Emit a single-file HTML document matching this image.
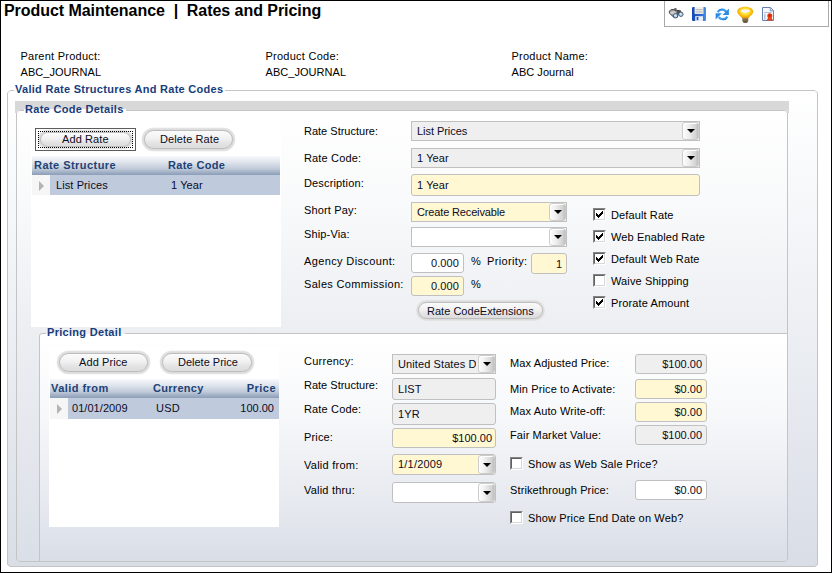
<!DOCTYPE html>
<html><head><meta charset="utf-8"><style>
*{box-sizing:border-box;}
html,body{margin:0;padding:0;}
body{width:832px;height:573px;position:relative;overflow:hidden;background:#fff;font-family:'Liberation Sans',sans-serif;}
.t{position:absolute;white-space:pre;}
.a{position:absolute;}
.grp{position:absolute;border:1px solid #c4c4c4;border-radius:3px;}
.btn{position:absolute;border-radius:12px;background:#e2e2e2;box-shadow:0 0 0 0.5px #f0f0f0;}
.btn>div{position:absolute;left:2px;top:2px;right:2px;bottom:2px;border:1px solid #bdbdbd;border-radius:10px;box-shadow:0 0 0 1px #dcdcdc;background:linear-gradient(#fbfbfb,#f1f1f1 45%,#e4e4e4 70%,#dcdcdc);}
.box{position:absolute;border:1px solid #c0c0c0;}
.gray{background:#efefef;}
.yel{background:#fff8d3;}
.wht{background:#fff;}
.dd{position:absolute;border-radius:3px;background:linear-gradient(90deg,#fdfdfd,#eeeeee 40%,#d2d2d2 85%,#bdbdbd);border:1px solid #cccccc;box-shadow:inset 1px 1px 0 #fff;}
.dd:after{content:"";position:absolute;left:50%;top:50%;margin-left:-4px;margin-top:-2px;border-left:4px solid transparent;border-right:4px solid transparent;border-top:4px solid #000;}
.cb{position:absolute;width:13px;height:13px;border:1px solid;border-color:#848484 #fff #fff #848484;}
.cb>div{position:absolute;left:0;top:0;width:11px;height:11px;border:1px solid;border-color:#606060 #d8d8d8 #d8d8d8 #606060;background:#fff;}
.cb svg{position:absolute;left:1px;top:1px;}
.ghdr{position:absolute;background:linear-gradient(#f7f8fb,#e2e7ee 30%,#bfc9d8 68%,#9aaac1 90%,#8c9db7);}
.grow{position:absolute;background:#c0cadd;}
.ind{position:absolute;background:#f6f6f6;}
.ind:after{content:"";position:absolute;left:7px;top:6px;border-top:5px solid transparent;border-bottom:5px solid transparent;border-left:5px solid #b4b4b4;}
</style></head><body>
<div class="a" style="left:0;top:0;width:832px;height:573px;border:1px solid #000;z-index:50"></div><div class="t" style="left:4px;top:1.46px;font-size:16px;line-height:20px;color:#000;font-weight:bold;letter-spacing:-0.05px;">Product Maintenance&nbsp; |&nbsp; Rates and Pricing</div><div class="a" style="left:664px;top:0;width:165px;height:27px;border:1px solid #a9a9a9;border-top:none;background:#fff"></div><svg class="a" style="left:668px;top:6px" width="16" height="14" viewBox="0 0 16 14">
<defs><linearGradient id="bn" x1="0" y1="0" x2="0.3" y2="1"><stop offset="0" stop-color="#5a5a5a"/><stop offset="0.45" stop-color="#d8d8d8"/><stop offset="1" stop-color="#6a6a6a"/></linearGradient></defs>
<path d="M8.5 4.2 L12.2 4.6 L14.6 7.2 L11.5 10 L9.2 7.8 Z" fill="#505050"/>
<path d="M1.2 5.2 L3.6 3.4 L6.3 3.6 L9.8 7.4 L9.4 11 L6.2 11.6 L1.6 7.4 Z" fill="url(#bn)" stroke="#3c3c3c" stroke-width="0.9" stroke-linejoin="round"/>
<rect x="6.3" y="2.2" width="2.2" height="1.6" fill="#4a4a4a"/>
<path d="M6.5 4 L12.8 5" stroke="#404040" stroke-width="1.2"/>
<circle cx="7.6" cy="9.8" r="2.2" fill="#a6d2fb" stroke="#3c4450" stroke-width="0.8"/>
<circle cx="12.9" cy="8.3" r="2.2" fill="#a6d2fb" stroke="#3c4450" stroke-width="0.8"/>
<circle cx="7.1" cy="9.3" r="0.8" fill="#eaf6ff"/><circle cx="12.4" cy="7.8" r="0.8" fill="#eaf6ff"/>
</svg><svg class="a" style="left:692px;top:7px" width="14" height="14" viewBox="0 0 14 14">
<defs><linearGradient id="fl" x1="0" y1="0" x2="1" y2="0"><stop offset="0" stop-color="#1648b0"/><stop offset="0.6" stop-color="#2a66cc"/><stop offset="1" stop-color="#4a90e8"/></linearGradient></defs>
<rect x="0" y="0" width="14" height="14" rx="1.2" fill="url(#fl)"/>
<rect x="2.6" y="0" width="8.9" height="6.9" fill="#f2f0ec"/>
<rect x="3.6" y="2.2" width="7" height="0.7" fill="#a8a8a8"/><rect x="3.6" y="3.8" width="7" height="0.7" fill="#a8a8a8"/><rect x="3.6" y="5.3" width="7" height="0.6" fill="#c0c0c0"/>
<rect x="3.2" y="9.2" width="7.8" height="4.8" fill="#e8eef8"/><rect x="4.6" y="10" width="1.8" height="3.2" fill="#1d58c0"/>
</svg><svg class="a" style="left:715px;top:6px" width="15" height="16" viewBox="0 0 15 16">
<defs><linearGradient id="rf" x1="0" y1="0" x2="1" y2="1"><stop offset="0" stop-color="#1b78de"/><stop offset="0.5" stop-color="#4aa8f4"/><stop offset="1" stop-color="#1b78de"/></linearGradient></defs>
<path d="M2.6 6.2 A5.2 5.2 0 0 1 11.2 5.6" fill="none" stroke="url(#rf)" stroke-width="2.3"/>
<path d="M7.6 8.9 L13.9 8.9 L13.9 2.6 Z" fill="#2a8ae8"/>
<path d="M12.4 10.6 A5.2 5.2 0 0 1 3.8 11.2" fill="none" stroke="url(#rf)" stroke-width="2.3"/>
<path d="M0.6 7.2 L6.9 7.2 L0.6 13.4 Z" fill="#2a8ae8"/>
</svg><svg class="a" style="left:737px;top:6px" width="17" height="17" viewBox="0 0 17 17">
<defs><radialGradient id="bg" cx="50%" cy="40%" r="60%"><stop offset="0" stop-color="#fffbe0"/><stop offset="0.35" stop-color="#ffe640"/><stop offset="0.8" stop-color="#f4b000"/><stop offset="1" stop-color="#d88000"/></radialGradient></defs>
<path d="M0.3 5.5 C0.3 -0.8 16.2 -0.8 16.2 5.5 C16.2 9 12 10.5 11.3 12.5 H5.2 C4.5 10.5 0.3 9 0.3 5.5 Z" fill="url(#bg)"/>
<ellipse cx="8.2" cy="5" rx="4.6" ry="1.4" fill="#f4f4ff"/>
<rect x="5.3" y="12.3" width="6" height="3.6" rx="0.8" fill="#7e6e48"/><rect x="6.3" y="15.5" width="4" height="1.3" fill="#4a4030"/>
</svg><svg class="a" style="left:762px;top:7px" width="12" height="14" viewBox="0 0 12 14">
<path d="M0.5 0.5 H8.5 L11.5 3.5 V13.5 H0.5 Z" fill="#f6f8fc" stroke="#6880b0" stroke-width="1"/>
<path d="M8.2 0.8 V3.8 H11.2" fill="#d8e2f2" stroke="#6880b0" stroke-width="0.8"/>
<rect x="2" y="5" width="7.5" height="0.7" fill="#90a4cc"/><rect x="2" y="7" width="1.6" height="5.5" fill="#b8c6e0"/>
<path d="M4.6 13.5 L6.2 10.5 L7.8 11.5 L9.4 10.5 L11 13.5 Z" fill="#ea3c0c"/>
<circle cx="7.8" cy="8.8" r="2.5" fill="#e83a10"/><circle cx="7.5" cy="8.4" r="1" fill="#c02000"/>
</svg><div class="t" style="left:20.5px;top:49.19px;font-size:11px;line-height:14px;color:#000;letter-spacing:0.25px;">Parent Product:</div><div class="t" style="left:20.5px;top:65.19px;font-size:11px;line-height:14px;color:#000;letter-spacing:0.05px;">ABC_JOURNAL</div><div class="t" style="left:265.5px;top:49.19px;font-size:11px;line-height:14px;color:#000;letter-spacing:0.25px;">Product Code:</div><div class="t" style="left:265.5px;top:65.19px;font-size:11px;line-height:14px;color:#000;letter-spacing:0.05px;">ABC_JOURNAL</div><div class="t" style="left:511.5px;top:49.19px;font-size:11px;line-height:14px;color:#000;letter-spacing:0.25px;">Product Name:</div><div class="t" style="left:511.5px;top:65.19px;font-size:11px;line-height:14px;color:#000;letter-spacing:0.05px;">ABC Journal</div><div class="a" style="left:7px;top:90px;width:811px;height:477px;background:linear-gradient(#ffffff 0px,#fafbfc 60px,#e9ecf1 280px,#d9dde6 477px);clip-path:polygon(2.5px 0,808.5px 0,811px 2.5px,811px 474.5px,808.5px 477px,2.5px 477px,0 474.5px,0 2.5px)"></div><svg class="a" style="left:7px;top:90px;z-index:1" width="811" height="477"><path d="M0.5 3.0 L3.0 0.5 L808.0 0.5 L810.5 3.0 L810.5 474.0 L808.0 476.5 L3.0 476.5 L0.5 474.0 Z" fill="none" stroke="#c4c4c4" stroke-width="1"/></svg><div class="t" style="left:15px;top:82.19px;font-size:11px;line-height:14px;color:#183d7c;font-weight:bold;letter-spacing:0.28px;z-index:2;background:#fff;padding:0 2px 0 1px;margin-left:-1px;">Valid Rate Structures And Rate Codes</div><div class="a" style="left:15px;top:101px;width:774px;height:12px;background:#d8d8d8;"></div><div class="a" style="left:16px;top:110px;width:772px;height:452px;background:linear-gradient(#ffffff 0px,#f8f9fa 100px,#eceef2 222px,#dfe3ea 400px,#dadfe7 452px);clip-path:polygon(2.5px 0,769.5px 0,772px 2.5px,772px 449.5px,769.5px 452px,2.5px 452px,0 449.5px,0 2.5px)"></div><svg class="a" style="left:16px;top:110px;z-index:1" width="772" height="452"><path d="M0.5 3.0 L3.0 0.5 L769.0 0.5 L771.5 3.0 L771.5 449.0 L769.0 451.5 L3.0 451.5 L0.5 449.0 Z" fill="none" stroke="#c4c4c4" stroke-width="1"/></svg><div class="t" style="left:25px;top:102.19px;font-size:11px;line-height:14px;color:#183d7c;font-weight:bold;letter-spacing:0.3px;z-index:2;padding:0 2px 0 1px;margin-left:-1px;background:linear-gradient(#d8d8d8 0,#d8d8d8 7px,#fff 7px);">Rate Code Details</div><div class="a" style="left:31px;top:120px;width:250px;height:207px;background:#fff;"></div><div class="a" style="left:35px;top:128px;width:101px;height:23px;border:1px solid #5c5c5c;"></div><div class="btn" style="left:38px;top:130px;width:95px;height:19px;"><div></div></div><div class="a" style="left:38px;top:131px;width:95px;height:17px;border:1px dotted #000;"></div><div class="t" style="left:62px;top:132.19px;font-size:11px;line-height:14px;color:#0c0c24;letter-spacing:0.1px;">Add Rate</div><div class="btn" style="left:142px;top:128px;width:93px;height:23px;"><div></div></div><div class="t" style="left:160px;top:132.19px;font-size:11px;line-height:14px;color:#0c0c24;letter-spacing:0.1px;">Delete Rate</div><div class="ghdr" style="left:32px;top:156px;width:248px;height:19px;"></div><div class="t" style="left:34px;top:158.19px;font-size:11px;line-height:14px;color:#1e4276;font-weight:bold;letter-spacing:0.45px;">Rate Structure</div><div class="t" style="left:168px;top:158.19px;font-size:11px;line-height:14px;color:#1e4276;font-weight:bold;letter-spacing:0.3px;">Rate Code</div><div class="ind" style="left:32px;top:175px;width:18px;height:20px;"></div><div class="grow" style="left:50px;top:175px;width:230px;height:20px;"></div><div class="t" style="left:56px;top:178.19px;font-size:11px;line-height:14px;color:#0c0c24;letter-spacing:0.1px;">List Prices</div><div class="t" style="left:171px;top:178.19px;font-size:11px;line-height:14px;color:#0c0c24;letter-spacing:0.1px;">1 Year</div><div class="t" style="left:304px;top:124.19px;font-size:11px;line-height:14px;color:#000;">Rate Structure:</div><div class="t" style="left:304px;top:151.19px;font-size:11px;line-height:14px;color:#000;letter-spacing:0.15px;">Rate Code:</div><div class="t" style="left:304px;top:176.19px;font-size:11px;line-height:14px;color:#000;letter-spacing:0.15px;">Description:</div><div class="t" style="left:304px;top:202.69px;font-size:11px;line-height:14px;color:#000;letter-spacing:0.15px;">Short Pay:</div><div class="t" style="left:304px;top:227.19px;font-size:11px;line-height:14px;color:#000;letter-spacing:0.15px;">Ship-Via:</div><div class="t" style="left:304px;top:254.19px;font-size:11px;line-height:14px;color:#000;letter-spacing:0.37px;">Agency Discount:</div><div class="t" style="left:304px;top:277.19px;font-size:11px;line-height:14px;color:#000;letter-spacing:0.33px;">Sales Commission:</div><div class="box gray" style="left:411px;top:121px;width:289px;height:20px;border-radius:0px"></div><div class="dd" style="left:682px;top:122px;width:17px;height:18px;"></div><div class="t" style="left:417px;top:124.19px;font-size:11px;line-height:14px;color:#0c0c24;letter-spacing:-0.05px;">List Prices</div><div class="box gray" style="left:411px;top:148px;width:289px;height:20px;border-radius:0px"></div><div class="dd" style="left:682px;top:149px;width:17px;height:18px;"></div><div class="t" style="left:417px;top:151.19px;font-size:11px;line-height:14px;color:#0c0c24;letter-spacing:0.1px;">1 Year</div><div class="box yel" style="left:411px;top:174px;width:289px;height:22px;border-radius:3px"></div><div class="t" style="left:417px;top:178.19px;font-size:11px;line-height:14px;color:#0c0c24;letter-spacing:0.1px;">1 Year</div><div class="box yel" style="left:411px;top:202px;width:156px;height:20px;border-radius:0px"></div><div class="dd" style="left:549px;top:203px;width:17px;height:18px;"></div><div class="t" style="left:417px;top:205.19px;font-size:11px;line-height:14px;color:#0c0c24;letter-spacing:-0.15px;">Create Receivable</div><div class="box wht" style="left:411px;top:227px;width:156px;height:20px;border-radius:0px"></div><div class="dd" style="left:549px;top:228px;width:17px;height:18px;"></div><div class="box wht" style="left:411px;top:253px;width:53px;height:20px;border-radius:3px"></div><div class="t" style="left:159px;top:256.19px;font-size:11px;line-height:14px;color:#0c0c24;letter-spacing:0.1px;width:300px;text-align:right;">0.000</div><div class="t" style="left:471px;top:254.19px;font-size:11px;line-height:14px;color:#000;">%</div><div class="t" style="left:487px;top:254.19px;font-size:11px;line-height:14px;color:#000;letter-spacing:0.35px;">Priority:</div><div class="box yel" style="left:531px;top:253px;width:36px;height:21px;border-radius:3px"></div><div class="t" style="left:262px;top:257.19px;font-size:11px;line-height:14px;color:#0c0c24;width:300px;text-align:right;">1</div><div class="box yel" style="left:411px;top:276px;width:53px;height:20px;border-radius:3px"></div><div class="t" style="left:159px;top:279.19px;font-size:11px;line-height:14px;color:#0c0c24;letter-spacing:0.1px;width:300px;text-align:right;">0.000</div><div class="t" style="left:471px;top:277.19px;font-size:11px;line-height:14px;color:#000;">%</div><div class="btn" style="left:416px;top:300px;width:129px;height:21px;"><div></div></div><div class="t" style="left:427px;top:304.19px;font-size:11px;line-height:14px;color:#0c0c24;letter-spacing:0.02px;">Rate CodeExtensions</div><div class="cb" style="left:593px;top:208px;"><div><svg width="7" height="7" shape-rendering="crispEdges" fill="#000"><rect x="6" y="0" width="1" height="1"/><rect x="5" y="1" width="1" height="1"/><rect x="6" y="1" width="1" height="1"/><rect x="0" y="2" width="1" height="1"/><rect x="4" y="2" width="1" height="1"/><rect x="5" y="2" width="1" height="1"/><rect x="6" y="2" width="1" height="1"/><rect x="0" y="3" width="1" height="1"/><rect x="1" y="3" width="1" height="1"/><rect x="3" y="3" width="1" height="1"/><rect x="4" y="3" width="1" height="1"/><rect x="5" y="3" width="1" height="1"/><rect x="0" y="4" width="1" height="1"/><rect x="1" y="4" width="1" height="1"/><rect x="2" y="4" width="1" height="1"/><rect x="3" y="4" width="1" height="1"/><rect x="4" y="4" width="1" height="1"/><rect x="1" y="5" width="1" height="1"/><rect x="2" y="5" width="1" height="1"/><rect x="3" y="5" width="1" height="1"/><rect x="2" y="6" width="1" height="1"/></svg></div></div><div class="t" style="left:611px;top:208.19px;font-size:11px;line-height:14px;color:#000;letter-spacing:0.12px;">Default Rate</div><div class="cb" style="left:593px;top:230px;"><div><svg width="7" height="7" shape-rendering="crispEdges" fill="#000"><rect x="6" y="0" width="1" height="1"/><rect x="5" y="1" width="1" height="1"/><rect x="6" y="1" width="1" height="1"/><rect x="0" y="2" width="1" height="1"/><rect x="4" y="2" width="1" height="1"/><rect x="5" y="2" width="1" height="1"/><rect x="6" y="2" width="1" height="1"/><rect x="0" y="3" width="1" height="1"/><rect x="1" y="3" width="1" height="1"/><rect x="3" y="3" width="1" height="1"/><rect x="4" y="3" width="1" height="1"/><rect x="5" y="3" width="1" height="1"/><rect x="0" y="4" width="1" height="1"/><rect x="1" y="4" width="1" height="1"/><rect x="2" y="4" width="1" height="1"/><rect x="3" y="4" width="1" height="1"/><rect x="4" y="4" width="1" height="1"/><rect x="1" y="5" width="1" height="1"/><rect x="2" y="5" width="1" height="1"/><rect x="3" y="5" width="1" height="1"/><rect x="2" y="6" width="1" height="1"/></svg></div></div><div class="t" style="left:611px;top:230.19px;font-size:11px;line-height:14px;color:#000;letter-spacing:0.12px;">Web Enabled Rate</div><div class="cb" style="left:593px;top:252px;"><div><svg width="7" height="7" shape-rendering="crispEdges" fill="#000"><rect x="6" y="0" width="1" height="1"/><rect x="5" y="1" width="1" height="1"/><rect x="6" y="1" width="1" height="1"/><rect x="0" y="2" width="1" height="1"/><rect x="4" y="2" width="1" height="1"/><rect x="5" y="2" width="1" height="1"/><rect x="6" y="2" width="1" height="1"/><rect x="0" y="3" width="1" height="1"/><rect x="1" y="3" width="1" height="1"/><rect x="3" y="3" width="1" height="1"/><rect x="4" y="3" width="1" height="1"/><rect x="5" y="3" width="1" height="1"/><rect x="0" y="4" width="1" height="1"/><rect x="1" y="4" width="1" height="1"/><rect x="2" y="4" width="1" height="1"/><rect x="3" y="4" width="1" height="1"/><rect x="4" y="4" width="1" height="1"/><rect x="1" y="5" width="1" height="1"/><rect x="2" y="5" width="1" height="1"/><rect x="3" y="5" width="1" height="1"/><rect x="2" y="6" width="1" height="1"/></svg></div></div><div class="t" style="left:611px;top:252.19px;font-size:11px;line-height:14px;color:#000;letter-spacing:0.12px;">Default Web Rate</div><div class="cb" style="left:593px;top:274px;"><div></div></div><div class="t" style="left:611px;top:274.19px;font-size:11px;line-height:14px;color:#000;letter-spacing:0.12px;">Waive Shipping</div><div class="cb" style="left:593px;top:296px;"><div><svg width="7" height="7" shape-rendering="crispEdges" fill="#000"><rect x="6" y="0" width="1" height="1"/><rect x="5" y="1" width="1" height="1"/><rect x="6" y="1" width="1" height="1"/><rect x="0" y="2" width="1" height="1"/><rect x="4" y="2" width="1" height="1"/><rect x="5" y="2" width="1" height="1"/><rect x="6" y="2" width="1" height="1"/><rect x="0" y="3" width="1" height="1"/><rect x="1" y="3" width="1" height="1"/><rect x="3" y="3" width="1" height="1"/><rect x="4" y="3" width="1" height="1"/><rect x="5" y="3" width="1" height="1"/><rect x="0" y="4" width="1" height="1"/><rect x="1" y="4" width="1" height="1"/><rect x="2" y="4" width="1" height="1"/><rect x="3" y="4" width="1" height="1"/><rect x="4" y="4" width="1" height="1"/><rect x="1" y="5" width="1" height="1"/><rect x="2" y="5" width="1" height="1"/><rect x="3" y="5" width="1" height="1"/><rect x="2" y="6" width="1" height="1"/></svg></div></div><div class="t" style="left:611px;top:296.19px;font-size:11px;line-height:14px;color:#000;letter-spacing:0.12px;">Prorate Amount</div><div class="a" style="left:17px;top:111px;width:770px;height:450px;overflow:hidden;"><div class="grp" style="left:22px;top:222px;width:800px;height:300px;border-radius:3px 0 0 0;background:linear-gradient(#ffffff 0px,#f7f8fa 80px,#e6e9ef 170px,#d9dee7 228px);"></div></div><div class="a" style="left:46px;top:333px;width:79px;height:1px;background:#eef0f3"></div><div class="t" style="left:47px;top:325.19px;font-size:11px;line-height:14px;color:#183d7c;font-weight:bold;letter-spacing:0.3px;">Pricing Detail</div><div class="a" style="left:49px;top:347px;width:230px;height:180px;background:#fff;"></div><div class="btn" style="left:57px;top:351px;width:93px;height:23px;"><div></div></div><div class="t" style="left:79px;top:355.19px;font-size:11px;line-height:14px;color:#0c0c24;letter-spacing:0.1px;">Add Price</div><div class="btn" style="left:160px;top:351px;width:94px;height:23px;"><div></div></div><div class="t" style="left:178px;top:355.19px;font-size:11px;line-height:14px;color:#0c0c24;">Delete Price</div><div class="ghdr" style="left:50px;top:379px;width:229px;height:19px;"></div><div class="t" style="left:51px;top:381.19px;font-size:11px;line-height:14px;color:#1e4276;font-weight:bold;letter-spacing:0.45px;">Valid from</div><div class="t" style="left:153px;top:381.19px;font-size:11px;line-height:14px;color:#1e4276;font-weight:bold;letter-spacing:0.3px;">Currency</div><div class="t" style="left:-24px;top:381.19px;font-size:11px;line-height:14px;color:#1e4276;font-weight:bold;letter-spacing:0.45px;width:300px;text-align:right;">Price</div><div class="ind" style="left:50px;top:398px;width:18px;height:21px;"></div><div class="grow" style="left:68px;top:398px;width:211px;height:21px;"></div><div class="t" style="left:72px;top:401.19px;font-size:11px;line-height:14px;color:#0c0c24;letter-spacing:0.05px;">01/01/2009</div><div class="t" style="left:156px;top:401.19px;font-size:11px;line-height:14px;color:#0c0c24;letter-spacing:0.2px;">USD</div><div class="t" style="left:-26px;top:401.19px;font-size:11px;line-height:14px;color:#0c0c24;width:300px;text-align:right;">100.00</div><div class="t" style="left:304px;top:354.19px;font-size:11px;line-height:14px;color:#000;letter-spacing:0.25px;">Currency:</div><div class="t" style="left:304px;top:377.69px;font-size:11px;line-height:14px;color:#000;">Rate Structure:</div><div class="t" style="left:304px;top:402.19px;font-size:11px;line-height:14px;color:#000;letter-spacing:0.15px;">Rate Code:</div><div class="t" style="left:304px;top:430.19px;font-size:11px;line-height:14px;color:#000;letter-spacing:0.15px;">Price:</div><div class="t" style="left:304px;top:458.19px;font-size:11px;line-height:14px;color:#000;letter-spacing:0.25px;">Valid from:</div><div class="t" style="left:304px;top:483.19px;font-size:11px;line-height:14px;color:#000;letter-spacing:0.2px;">Valid thru:</div><div class="box gray" style="left:392px;top:354px;width:104px;height:20px;border-radius:0px"></div><div class="dd" style="left:478px;top:355px;width:17px;height:18px;"></div><div class="t" style="left:398px;top:357.19px;font-size:11px;line-height:14px;color:#0c0c24;letter-spacing:0.1px;width:78px;overflow:hidden;">United States D</div><div class="box gray" style="left:392px;top:378px;width:104px;height:22px;border-radius:3px"></div><div class="t" style="left:398px;top:382.19px;font-size:11px;line-height:14px;color:#0c0c24;letter-spacing:0.1px;">LIST</div><div class="box gray" style="left:392px;top:403px;width:104px;height:22px;border-radius:3px"></div><div class="t" style="left:398px;top:407.19px;font-size:11px;line-height:14px;color:#0c0c24;letter-spacing:0.1px;">1YR</div><div class="box yel" style="left:392px;top:428px;width:104px;height:20px;border-radius:3px"></div><div class="t" style="left:192px;top:431.19px;font-size:11px;line-height:14px;color:#0c0c24;width:300px;text-align:right;">$100.00</div><div class="box yel" style="left:392px;top:454px;width:104px;height:21px;border-radius:3px"></div><div class="dd" style="left:478px;top:455px;width:17px;height:19px;"></div><div class="t" style="left:398px;top:457.19px;font-size:11px;line-height:14px;color:#0c0c24;letter-spacing:0.2px;">1/1/2009</div><div class="box wht" style="left:392px;top:482px;width:104px;height:21px;border-radius:3px"></div><div class="dd" style="left:478px;top:483px;width:17px;height:19px;"></div><div class="t" style="left:510px;top:356.19px;font-size:11px;line-height:14px;color:#000;letter-spacing:0.12px;">Max Adjusted Price:</div><div class="t" style="left:510px;top:381.69px;font-size:11px;line-height:14px;color:#000;letter-spacing:0.12px;">Min Price to Activate:</div><div class="t" style="left:510px;top:404.19px;font-size:11px;line-height:14px;color:#000;letter-spacing:0.12px;">Max Auto Write-off:</div><div class="t" style="left:510px;top:427.69px;font-size:11px;line-height:14px;color:#000;letter-spacing:0.12px;">Fair Market Value:</div><div class="box gray" style="left:635px;top:354px;width:72px;height:20px;border-radius:3px"></div><div class="t" style="left:402px;top:357.19px;font-size:11px;line-height:14px;color:#0c0c24;width:300px;text-align:right;">$100.00</div><div class="box yel" style="left:635px;top:379px;width:72px;height:20px;border-radius:3px"></div><div class="t" style="left:402px;top:382.19px;font-size:11px;line-height:14px;color:#0c0c24;width:300px;text-align:right;">$0.00</div><div class="box yel" style="left:635px;top:402px;width:72px;height:20px;border-radius:3px"></div><div class="t" style="left:402px;top:405.19px;font-size:11px;line-height:14px;color:#0c0c24;width:300px;text-align:right;">$0.00</div><div class="box gray" style="left:635px;top:425px;width:72px;height:20px;border-radius:3px"></div><div class="t" style="left:402px;top:428.19px;font-size:11px;line-height:14px;color:#0c0c24;width:300px;text-align:right;">$100.00</div><div class="cb" style="left:510px;top:457px;"><div></div></div><div class="t" style="left:528px;top:457.19px;font-size:11px;line-height:14px;color:#000;letter-spacing:0.12px;">Show as Web Sale Price?</div><div class="t" style="left:510px;top:483.19px;font-size:11px;line-height:14px;color:#000;letter-spacing:0.12px;">Strikethrough Price:</div><div class="box wht" style="left:635px;top:480px;width:72px;height:20px;border-radius:3px"></div><div class="t" style="left:402px;top:483.19px;font-size:11px;line-height:14px;color:#0c0c24;width:300px;text-align:right;">$0.00</div><div class="cb" style="left:510px;top:511px;"><div></div></div><div class="t" style="left:528px;top:511.19px;font-size:11px;line-height:14px;color:#000;letter-spacing:0.15px;">Show Price End Date on Web?</div></body></html>
